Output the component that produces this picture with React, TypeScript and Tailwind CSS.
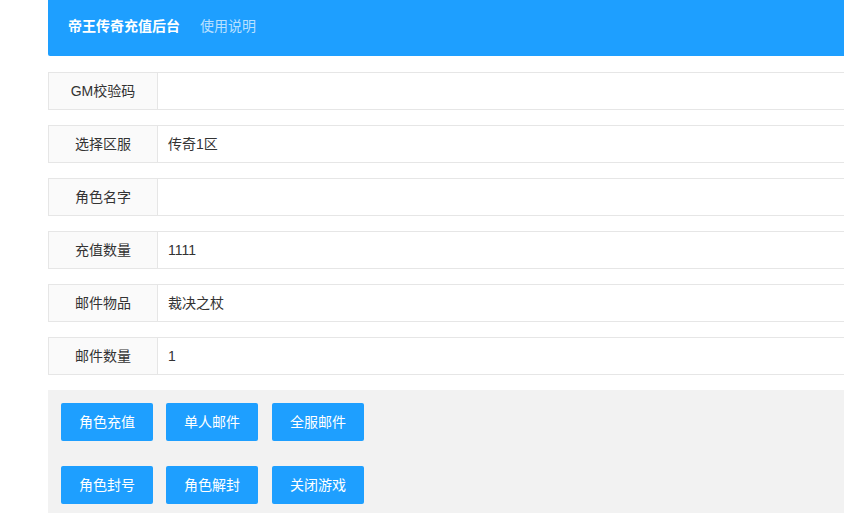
const fields = [
  { label: "GM校验码", value: "" },
  { label: "选择区服", value: "传奇1区" },
  { label: "角色名字", value: "" },
  { label: "充值数量", value: "1111" },
  { label: "邮件物品", value: "裁决之杖" },
  { label: "邮件数量", value: "1" },
];

const buttonRows = [
  ["角色充值", "单人邮件", "全服邮件"],
  ["角色封号", "角色解封", "关闭游戏"],
];

export default function App() {
  return (
    <div
      className="w-full h-[519px] overflow-hidden bg-white text-[14px] text-[#333]"
      style={{ fontFamily: '"Liberation Sans", "Noto Sans CJK SC", sans-serif' }}
    >
      <div className="ml-[48px] w-[1000px]">
        <div className="h-[56px] bg-[#1e9fff] rounded-bl-[2px] flex items-center px-[20px] pb-[4px] gap-[20px]">
          <span className="font-bold text-white leading-[20px]">帝王传奇充值后台</span>
          <span className="text-white/70 leading-[20px]">使用说明</span>
        </div>

        <div className="mt-[16px] flex flex-col gap-[15px]">
          {fields.map((f) => (
            <div key={f.label} className="flex h-[38px] border border-[#e6e6e6]">
              <div className="w-[109px] shrink-0 bg-[#fafafa] border-r border-[#e6e6e6] flex items-center justify-center leading-[20px]">
                {f.label}
              </div>
              <div className="flex-1 flex items-center pl-[10px] leading-[20px]">{f.value}</div>
            </div>
          ))}
        </div>

        <div className="mt-[15px] bg-[#f2f2f2] pt-[13px] pb-[9px] pl-[13px] flex flex-col gap-[25px]">
          {buttonRows.map((row, i) => (
            <div key={i} className="flex">
              {row.map((b, j) => (
                <button
                  key={b}
                  className={
                    "h-[38px] w-[92px] bg-[#1e9fff] text-white rounded-[2px] leading-[20px] flex items-center justify-center " +
                    (j === 0 ? "" : j === 1 ? "ml-[13px]" : "ml-[14px]")
                  }
                >
                  {b}
                </button>
              ))}
            </div>
          ))}
        </div>
      </div>
    </div>
  );
}
